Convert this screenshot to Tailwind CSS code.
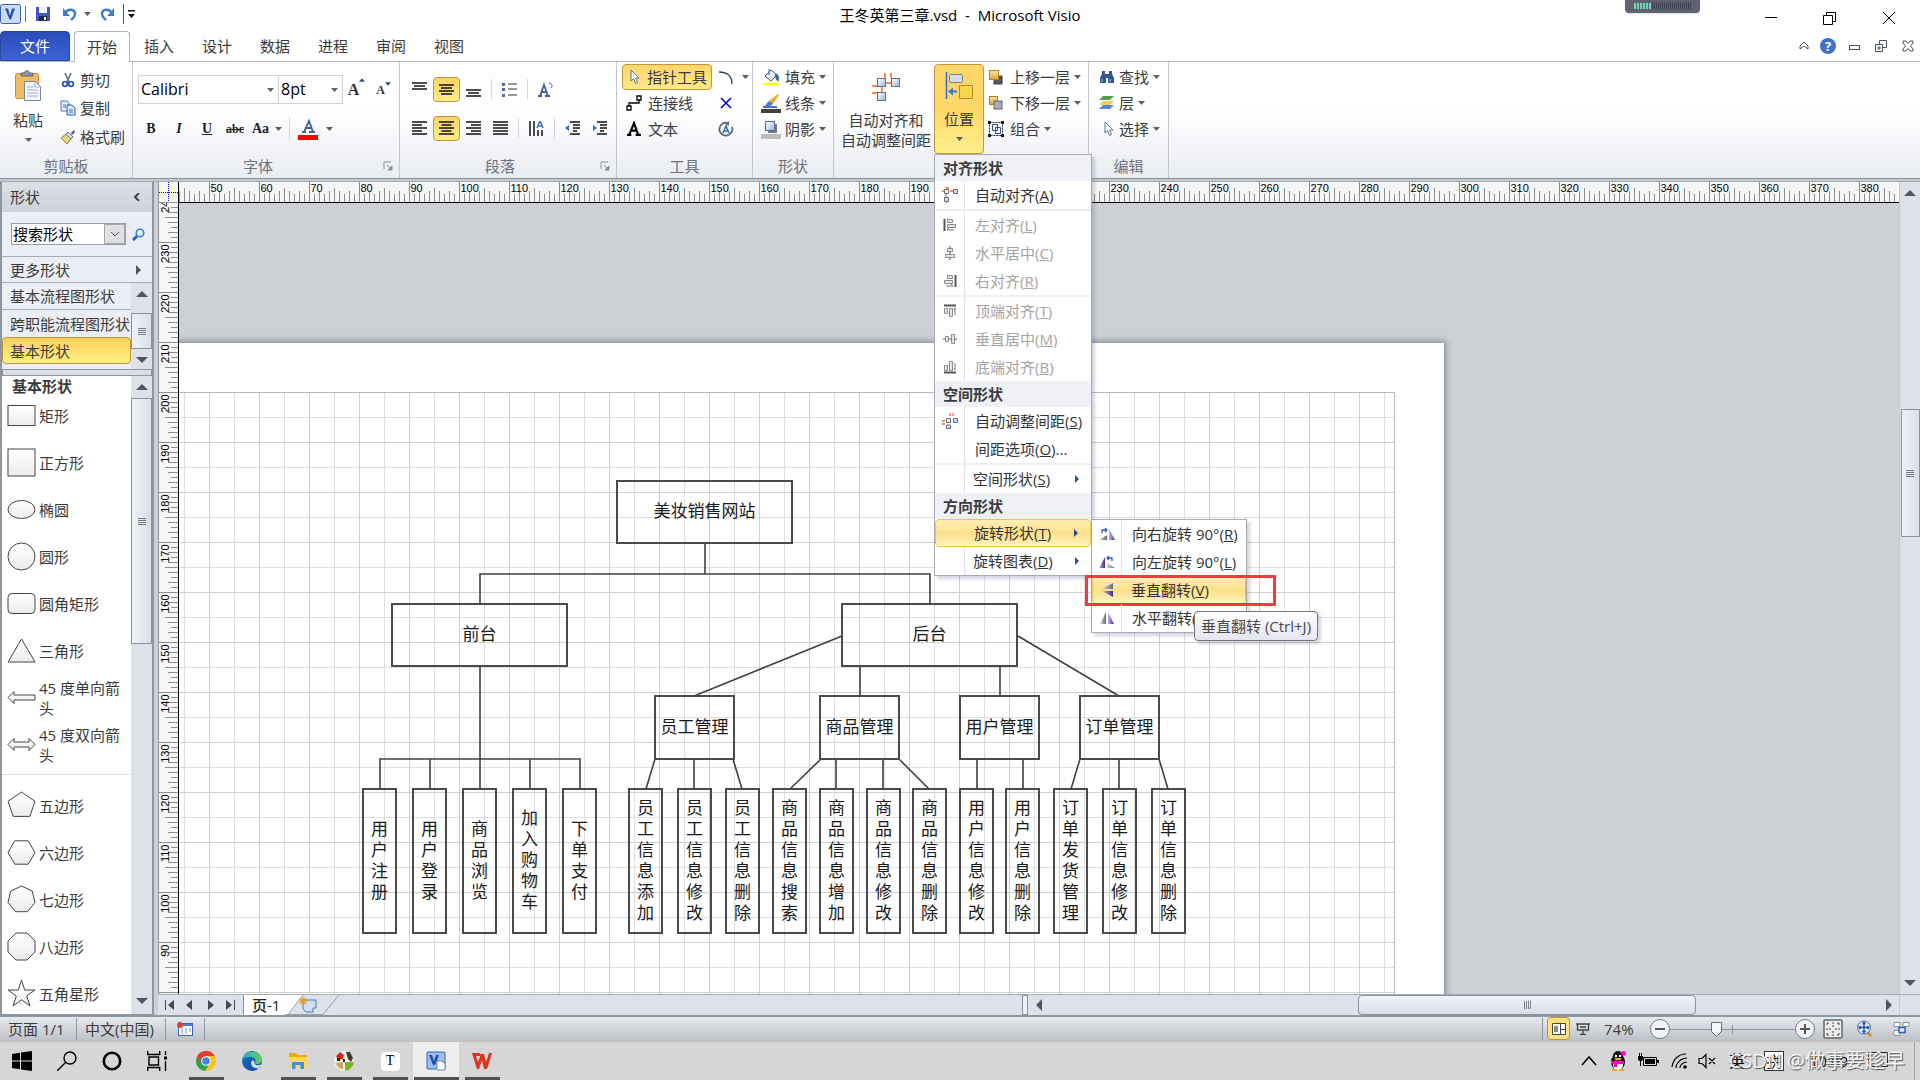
<!DOCTYPE html>
<html lang="zh-CN">
<head>
<meta charset="utf-8">
<title>王冬英第三章.vsd - Microsoft Visio</title>
<script src="https://cdn.jsdelivr.net/npm/@tailwindcss/browser@4"></script>
</head>
<body class="flex h-screen flex-col overflow-hidden bg-white font-['Open_Sans','Noto_Sans_CJK_SC',sans-serif] text-[15px] leading-5 text-[#3b3b3b]">

<svg class="absolute size-0" aria-hidden="true">
  <defs>
    <linearGradient id="gBlue" x1="0" y1="0" x2="1" y2="1"><stop offset="0" stop-color="#fff"/><stop offset="1" stop-color="#9fb6dc"/></linearGradient>
    <linearGradient id="gGold" x1="0" y1="0" x2="0" y2="1"><stop offset="0" stop-color="#fdeaa8"/><stop offset="1" stop-color="#e0a530"/></linearGradient>
    <linearGradient id="gShape" x1="0" y1="0" x2="0" y2="1"><stop offset="0" stop-color="#fff"/><stop offset="1" stop-color="#ececec"/></linearGradient>
    <linearGradient id="gGray" x1="0" y1="0" x2="1" y2="0"><stop offset="0" stop-color="#d5dbe0"/><stop offset="1" stop-color="#5f6d78"/></linearGradient>
    <linearGradient id="gPurple" x1="0" y1="0" x2="1" y2="0"><stop offset="0" stop-color="#c9b8ea"/><stop offset="1" stop-color="#46278c"/></linearGradient>
    <linearGradient id="gEdge" x1="0" y1="0" x2="1" y2="1"><stop offset="0" stop-color="#1b6fc4"/><stop offset="1" stop-color="#0a4a9a"/></linearGradient>
    <linearGradient id="gEdge2" x1="0" y1="0" x2="1" y2="0"><stop offset="0" stop-color="#2aa7e0"/><stop offset="1" stop-color="#5fd45a"/></linearGradient>
    <symbol id="caret" viewBox="0 0 7 4"><path d="M0 0h7L3.500 4z" fill="#5a5f66"/></symbol>
    <symbol id="cursor" viewBox="0 0 12 16"><path d="M2 1v11l2.600-2.400L6.500 14.500l2-1-1.900-4.400H10z" fill="#fff" stroke="#5b7596"/></symbol>
    <symbol id="launcher" viewBox="0 0 10 10"><path d="M1 8V1h7" fill="none" stroke="#8b919b"/><path d="M4 4l3 3M9 5v4H5z" stroke="#8b919b" fill="#8b919b"/></symbol>
    <symbol id="front" viewBox="0 0 16 16"><rect x="6" y="7" width="8" height="8" fill="#555c66" stroke="#3c424a"/><rect x="1.500" y="1.500" width="9" height="9" fill="url(#gGold)" stroke="#b07f2c"/></symbol>
    <symbol id="back" viewBox="0 0 16 16"><rect x="1.500" y="1.500" width="8" height="8" fill="url(#gGold)" stroke="#b07f2c"/><rect x="6" y="6" width="8" height="8" fill="#a8adb3" stroke="#60666e"/></symbol>
    <symbol id="autoalign" viewBox="0 0 30 30"><g stroke="#f26a21" stroke-width="1.500" fill="none"><path d="M14 1v5M20 1v5M14 11h8M11 14v9M1 14h6M1 21h5"/></g><g fill="url(#gBlue)" stroke="#5d6f8e"><rect x="6.500" y="6.500" width="8" height="8"/><rect x="20.500" y="6.500" width="8" height="8"/><rect x="6.500" y="20.500" width="8" height="8"/></g></symbol>
  </defs>
</svg>

<!-- title bar -->
<header class="flex h-8 shrink-0 items-center">
  <div class="flex flex-1 items-center pb-1">
    <svg class="h-7 w-[21px]" viewBox="0 0 21 28"><rect x=".5" y="4.500" width="20" height="19" rx="2" fill="#c9dcf8" stroke="#3763bb"/><path d="M5 8.500l4.500 11h1.500l4-11h-3l-2 7-2-7z" fill="#2b50b0"/></svg>
    <span class="ml-1 h-4 w-px bg-gray-500"></span>
    <button class="ml-[9px]" aria-label="保存"><svg class="size-4" viewBox="0 0 16 16"><path d="M1 1h14v14H1z" fill="#4655c0"/><path d="M4 1h8v6H4z" fill="#eef2fb"/><path d="M4 10h8v5H4z" fill="#20264f"/><path d="M9 11h2v3H9z" fill="#fff"/></svg></button>
    <button class="ml-[11px]" aria-label="撤消"><svg class="size-4" viewBox="0 0 16 16"><path d="M3 7c3-5 10-4 10 1 0 3-2 4-4 6" fill="none" stroke="#3a7cd0" stroke-width="2.400"/><path d="M1 2v8h7z" fill="#3a7cd0"/></svg></button>
    <svg class="ml-1.5 h-1 w-[7px]"><use href="#caret"/></svg>
    <button class="ml-2" aria-label="恢复"><svg class="size-4" viewBox="0 0 16 16"><path d="M13 7C10 2 3 3 3 8c0 3 2 4 4 6" fill="none" stroke="#3a7cd0" stroke-width="2.400"/><path d="M15 2v8H8z" fill="#3a7cd0"/></svg></button>
    <span class="ml-2 h-5 w-px bg-gray-600"></span>
    <svg class="ml-1 h-2 w-[7px]" viewBox="0 0 7 8"><path d="M0 0h7v1.500H0zM0 4h7L3.500 8z" fill="#111"/></svg>
  </div>
  <h1 class="whitespace-pre pb-0.5 text-[15px] text-black">王冬英第三章.vsd  -  Microsoft Visio</h1>
  <div class="flex flex-1 items-start justify-end self-stretch">
    <div class="mr-16 flex h-[13px] w-[75px] justify-center rounded-b bg-[#5f6371] pt-0.5 shadow">
      <svg class="h-2 w-[58px]" viewBox="0 0 58 8"><path d="M0 4h17" stroke="#6fd3b4" stroke-width="6" stroke-dasharray="2 1"/><path d="M18 4h40" stroke="#3d404c" stroke-width="7" stroke-dasharray="1 1"/></svg>
    </div>
    <button class="flex h-9 w-[14px] items-center justify-center" aria-label="最小化"><svg class="h-4 w-3" viewBox="0 0 12 16"><path d="M0 7.500h12" stroke="#000"/></svg></button>
    <button class="ml-11 flex h-9 w-[14px] items-center justify-center" aria-label="还原"><svg class="h-[13px] w-[13px]" viewBox="0 0 13 13"><path d="M.5 3.500h9v9h-9zM3.500 3.500v-3h9v9h-3" fill="none" stroke="#000"/></svg></button>
    <button class="ml-[46px] mr-6 flex h-9 w-[14px] items-center justify-center" aria-label="关闭"><svg class="h-3 w-3" viewBox="0 0 12 12"><path d="M0 0l12 12M12 0L0 12" stroke="#000"/></svg></button>
  </div>
</header>

<!-- tabs -->
<nav class="flex h-[30px] shrink-0 items-end border-b border-[#b3b5b9]">
  <button class="h-[30px] w-[70px] rounded-t border border-[#2a459f] bg-linear-to-b from-[#2c4cba] to-[#3a63d6] text-white">文件</button>
  <button class="-mb-px ml-1 h-[31px] w-[56px] rounded-t border border-b-0 border-[#b3b5b9] bg-white">开始</button>
  <button class="h-[30px] w-[58px]">插入</button>
  <button class="h-[30px] w-[58px]">设计</button>
  <button class="h-[30px] w-[58px]">数据</button>
  <button class="h-[30px] w-[58px]">进程</button>
  <button class="h-[30px] w-[58px]">审阅</button>
  <button class="h-[30px] w-[58px]">视图</button>
  <div class="ml-auto flex h-[30px] items-center gap-[15px] pr-1.5">
    <svg class="h-2.5 w-2.5" viewBox="0 0 10 10"><path d="M1 8V5l4-4 4 4v3L5 5z" fill="none" stroke="#4b525c"/></svg>
    <button class="-mx-1 flex size-4 items-center justify-center rounded-full bg-[#3e73c9] text-[13px] font-bold text-white" aria-label="帮助">?</button>
    <svg class="ml-0.5 h-3 w-[11px]" viewBox="0 0 11 12"><rect x=".5" y="5.500" width="10" height="4" fill="none" stroke="#4b525c"/></svg>
    <svg class="h-3 w-3" viewBox="0 0 12 12"><path d="M.5 4.500h7v7h-7zM4.500 4V.5h7v7H8M3 7h2v2H3z" fill="none" stroke="#4b525c"/></svg>
    <svg class="h-3 w-3" viewBox="0 0 12 12"><path d="M1 1h3l2 2.500L8 1h3v2L8.500 6 11 9v2H8L6 8.500 4 11H1V9l2.500-3L1 3z" fill="none" stroke="#4b525c"/></svg>
  </div>
</nav>

<!-- ribbon -->
<section class="flex h-[116px] shrink-0 bg-linear-to-b from-white from-40% to-[#e9ecf1]" aria-label="功能区">
  <div class="flex w-[133px] flex-col border-r border-[#c3c6ce]">
    <div class="flex flex-1 gap-1">
      <button class="flex w-[56px] flex-col items-center pt-2">
        <svg class="h-8 w-7" viewBox="0 0 28 32"><rect x="1.500" y="3.500" width="23" height="25" rx="2" fill="#f0bc62" stroke="#c98d34"/><path d="M7 6V3h3c1-3 5-3 6 0h3v3z" fill="#8c929c" stroke="#666c76"/><path d="M10.500 11.500h11l5 5v14h-16z" fill="#f3f7fd" stroke="#7488a8"/><path d="M21 12v5h5M13 17h6M13 20h11M13 23h11M13 26h11" stroke="#9fb2cf" fill="none"/></svg>
        <span class="mt-2">粘贴</span>
        <svg class="mt-2 h-1 w-[7px]"><use href="#caret"/></svg>
      </button>
      <div class="flex flex-col pt-1">
        <button class="flex h-7 items-center gap-1"><svg class="size-4" viewBox="0 0 16 16"><path d="M5 1l4 9M11 1L7 10" stroke="#5a6880" stroke-width="1.500"/><circle cx="5" cy="12" r="2.300" fill="none" stroke="#2f59b8" stroke-width="1.800"/><circle cx="11" cy="12" r="2.300" fill="none" stroke="#2f59b8" stroke-width="1.800"/></svg>剪切</button>
        <button class="flex h-7 items-center gap-1"><svg class="size-4" viewBox="0 0 16 16"><path d="M1 1h6l2 2v8H1z" fill="#e6effb" stroke="#4772b8"/><path d="M7 5h5l3 3v7H7z" fill="#dbe7f8" stroke="#2f59a8"/><path d="M3 5h3M3 7h3M9 10h4M9 12h4" stroke="#4772b8"/></svg>复制</button>
        <button class="flex h-[30px] items-center gap-1 whitespace-nowrap"><svg class="size-4" viewBox="0 0 16 16"><path d="M1 9l5-4 5 5-4 5z" fill="#e8d27a" stroke="#9c8433"/><path d="M6 5l2-2 5 5-2 2z" fill="#dcdfe6" stroke="#6d7480"/><path d="M11 4l3-3 1 2-3 3z" fill="#4a4f9c"/></svg>格式刷</button>
      </div>
    </div>
    <div class="flex h-6 items-center justify-center text-[#6b7280]">剪贴板</div>
  </div>

  <div class="flex w-[267px] flex-col border-r border-[#c3c6ce]">
    <div class="flex flex-1 flex-col pt-[13px]">
      <div class="flex h-[29px] items-center pl-[5px] text-black">
        <label class="relative flex h-[29px] w-[141px] items-center border border-[#cfd2d6] bg-white"><select class="w-full appearance-none bg-transparent px-0.5 pb-0.5 text-base" aria-label="字体"><option>Calibri</option></select><svg class="pointer-events-none absolute right-1 h-1 w-[7px]"><use href="#caret"/></svg></label>
        <label class="relative -ml-px flex h-[29px] w-[65px] items-center border border-[#cfd2d6] bg-white"><select class="w-full appearance-none bg-transparent px-0.5 pb-0.5 text-base" aria-label="字号"><option>8pt</option></select><svg class="pointer-events-none absolute right-1 h-1 w-[7px]"><use href="#caret"/></svg></label>
        <button class="flex w-[27px] items-start justify-center font-['Liberation_Serif',serif] text-base font-bold text-[#333]" aria-label="增大字号">A<svg class="h-1 w-1.5" viewBox="0 0 7 4"><path d="M0 4h7L3.500 0z" fill="#2b4a8c"/></svg></button>
        <button class="flex w-[27px] items-start justify-center font-['Liberation_Serif',serif] text-xs font-bold text-[#333]" aria-label="减小字号">A<svg class="h-1 w-1.5" viewBox="0 0 7 4"><path d="M0 0h7L3.500 4z" fill="#2b4a8c"/></svg></button>
      </div>
      <div class="mt-[11px] flex h-7 items-center pl-1 font-['Liberation_Serif',serif] text-sm font-bold text-[#222]">
        <button class="w-7">B</button><button class="w-7 italic">I</button><button class="w-7 underline">U</button><button class="w-7 text-xs line-through">abc</button>
        <button class="flex w-9 items-center justify-center gap-1.5">Aa<svg class="h-1 w-[7px]"><use href="#caret"/></svg></button>
        <span class="ml-1 h-6 w-px bg-[#d3d6dc]"></span>
        <button class="ml-2 flex items-center gap-2" aria-label="字体颜色"><svg class="h-[22px] w-5" viewBox="0 0 20 22"><path d="M0 17h20v5H0z" fill="#f00"/><path d="M4 14h4M11 14h6M6 14l5-11 4 11M7.500 10h6" stroke="#3f5f9f" stroke-width="1.800" fill="none"/></svg><svg class="h-1 w-[7px]"><use href="#caret"/></svg></button>
      </div>
    </div>
    <div class="flex h-6 items-center pr-1.5 text-[#6b7280]"><span class="flex-1 text-center">字体</span><svg class="size-2.5"><use href="#launcher"/></svg></div>
  </div>

  <div class="flex w-[217px] flex-col border-r border-[#c3c6ce]">
    <div class="flex flex-1 flex-col gap-[13px] pl-1.5 pt-[14px]" id="para"></div>
    <div class="flex h-6 items-center pr-1.5 text-[#6b7280]"><span class="flex-1 text-center">段落</span><svg class="size-2.5"><use href="#launcher"/></svg></div>
  </div>

  <div class="flex w-[136px] flex-col border-r border-[#c3c6ce]">
    <div class="flex flex-1 gap-1.5 pl-[5px] pt-0.5">
      <div class="flex w-[90px] flex-col">
        <button class="flex h-[26px] items-center gap-1.5 whitespace-nowrap rounded-sm border border-[#c29539] bg-linear-to-b from-[#ffd56a] to-[#ffe98a] pl-1.5"><svg class="h-4 w-3"><use href="#cursor"/></svg>指针工具</button>
        <button class="flex h-[26px] items-center gap-1.5 pl-1"><svg class="size-4" viewBox="0 0 16 16"><path d="M1 11h4v4H1zM11 1h4v4h-4zM3 11V8h10V5" fill="none" stroke="#000" stroke-width="1.300"/></svg>连接线</button>
        <button class="flex h-[26px] items-center gap-1.5 pl-1"><svg class="size-4" viewBox="0 0 15 15"><path d="M1 13h4M9 13h5M3 13l4.500-11 4 11M5 9h5" stroke="#000" stroke-width="2" fill="none"/></svg>文本</button>
      </div>
      <div class="flex flex-col">
        <button class="flex h-[26px] items-center gap-2" aria-label="线条工具"><svg class="size-4" viewBox="0 0 16 16"><path d="M1 3c8 0 13 4 13 12" fill="none" stroke="#2b4468" stroke-width="1.300"/></svg><svg class="h-1 w-[7px]"><use href="#caret"/></svg></button>
        <button class="flex h-[26px] items-center pl-0.5" aria-label="连接点"><svg class="size-3" viewBox="0 0 12 12"><path d="M1 1l10 10M11 1L1 11" stroke="#00c" stroke-width="1.600"/></svg></button>
        <button class="flex h-[26px] items-center" aria-label="文本块"><svg class="size-4" viewBox="0 0 16 16"><path d="M10 2a6.500 6.500 0 1 0 4 4" fill="none" stroke="#5d6878" stroke-width="1.800"/><path d="M11 0v5l-4-2z" fill="#5d6878"/><path d="M5 12l3-7 3 7M6 10h4" fill="none" stroke="#3565c0" stroke-width="1.500"/></svg></button>
      </div>
    </div>
    <div class="flex h-6 items-center justify-center text-[#6b7280]">工具</div>
  </div>

  <div class="flex w-[81px] flex-col border-r border-[#c3c6ce]">
    <div class="flex flex-1 flex-col pl-2 pt-0.5">
      <button class="flex h-[26px] items-center whitespace-nowrap"><svg class="h-5 w-5" viewBox="0 0 20 20"><path d="M3 17h15" stroke="#ff0" stroke-width="2.500"/><path d="M4 9l6-6 6 5-6 6z" fill="#e8edf5" stroke="#47597c"/><path d="M8 2v6M15 7c3 1 3 4 2 7-2-1-2-4-3-6z" fill="#3565b0" stroke="#3565b0"/></svg><span class="mx-1">填充</span><svg class="h-1 w-[7px]"><use href="#caret"/></svg></button>
      <button class="flex h-[26px] items-center whitespace-nowrap"><svg class="h-5 w-5" viewBox="0 0 20 20"><path d="M0 16h20v4H0z" fill="#3f3f46"/><path d="M2 14h14" stroke="#1b33d6" stroke-width="1.500"/><path d="M7 9l3 3-6 1z" fill="#2f6fc8"/><path d="M8 8l9-7 1 1-6 9-3 1z" fill="#f0a730"/><path d="M8 8l4 3-3 2-4 0z" fill="#3f7fd8"/></svg><span class="mx-1">线条</span><svg class="h-1 w-[7px]"><use href="#caret"/></svg></button>
      <button class="flex h-[26px] items-center whitespace-nowrap"><svg class="h-5 w-5" viewBox="0 0 20 20"><path d="M0 15h20v5H0z" fill="#bdbdbd"/><rect x="7" y="5" width="9" height="9" fill="#777"/><rect x="4.500" y="2.500" width="9" height="9" fill="url(#gBlue)" stroke="#536f9f"/></svg><span class="mx-1">阴影</span><svg class="h-1 w-[7px]"><use href="#caret"/></svg></button>
    </div>
    <div class="flex h-6 items-center justify-center text-[#6b7280]">形状</div>
  </div>

  <div class="flex w-[255px] flex-col border-r border-[#c3c6ce]">
    <div class="flex flex-1 pt-0.5">
      <button class="flex w-[100px] flex-col items-center whitespace-nowrap pl-1 pt-2">
        <svg class="h-[30px] w-[30px]"><use href="#autoalign"/></svg>
        <span class="mt-2">自动对齐和</span><span>自动调整间距</span>
      </button>
      <div class="relative h-[90px] w-[50px]">
        <button class="flex h-[90px] w-[50px] flex-col items-center rounded-sm border border-[#c29539] bg-linear-to-b from-[#ffd56a] via-[#ffd768] to-[#fff08c] pt-1.5" aria-haspopup="true">
          <svg class="h-[30px] w-7" viewBox="0 0 28 30"><path d="M1.500 1v27" stroke="#2f6fd0" stroke-width="1.500"/><rect x="4.500" y="3.500" width="13" height="8" rx="1" fill="#d8dce2" stroke="#777f8a"/><rect x="14.500" y="14.500" width="13" height="13" fill="#f6d84f" stroke="#b08d2c"/><path d="M3 20.500l5-4v3h4v2H8v3z" fill="#4377c8"/></svg>
          <span class="mt-2">位置</span>
          <svg class="mt-2 h-1 w-[7px]"><use href="#caret"/></svg>
        </button>
        <!-- position menu -->
        <div class="absolute left-0 top-full z-40 w-[158px] border border-[#a7abb4] bg-white shadow-[3px_3px_3px_rgba(90,90,140,0.25)]" id="menu" role="menu"></div>
      </div>
      <div class="flex flex-col whitespace-nowrap pl-1">
        <button class="flex h-[26px] items-center"><svg class="size-4"><use href="#front"/></svg><span class="ml-1.5 mr-1">上移一层</span><svg class="h-1 w-[7px]"><use href="#caret"/></svg></button>
        <button class="flex h-[26px] items-center"><svg class="size-4"><use href="#back"/></svg><span class="ml-1.5 mr-1">下移一层</span><svg class="h-1 w-[7px]"><use href="#caret"/></svg></button>
        <button class="flex h-[26px] items-center"><svg class="size-4" viewBox="0 0 16 16"><path d="M1.500 1.500h13v13h-13z" fill="none" stroke="#222" stroke-dasharray="2 1"/><path d="M0 0h3v3H0zM13 0h3v3h-3zM0 13h3v3H0zM13 13h3v3h-3z" fill="#111"/><path d="M4.500 3.500h5v6h-5zM7.500 6.500h5v6h-5z" fill="none" stroke="#2f4f8f"/></svg><span class="ml-1.5 mr-1">组合</span><svg class="h-1 w-[7px]"><use href="#caret"/></svg></button>
      </div>
    </div>
    <div class="flex h-6 items-center justify-center text-[#6b7280]">排列</div>
  </div>

  <div class="flex w-[80px] flex-col border-r border-[#c3c6ce]">
    <div class="flex flex-1 flex-col whitespace-nowrap pl-2.5 pt-0.5">
      <button class="flex h-[26px] items-center"><svg class="h-4 w-4" viewBox="0 0 16 16"><path d="M3 2h3v3h4V2h3v3l2 4v5H9V9H7v5H1V9l2-4z" fill="#34558f"/><path d="M3 10v3M11 10v3" stroke="#a9c4ee"/></svg><span class="mx-1">查找</span><svg class="h-1 w-[7px]"><use href="#caret"/></svg></button>
      <button class="flex h-[26px] items-center"><svg class="h-4 w-4" viewBox="0 0 16 16"><path d="M4 10h11l-4 4H0z" fill="#4f8ae0"/><path d="M4 6h11l-4 4H0z" fill="#f0cf4e"/><path d="M4 1h11l-4 4H0z" fill="#4ea04e"/></svg><span class="mx-1">层</span><svg class="h-1 w-[7px]"><use href="#caret"/></svg></button>
      <button class="flex h-[26px] items-center"><svg class="ml-1 h-4 w-3"><use href="#cursor"/></svg><span class="mx-1">选择</span><svg class="h-1 w-[7px]"><use href="#caret"/></svg></button>
    </div>
    <div class="flex h-6 items-center justify-center text-[#6b7280]">编辑</div>
  </div>
</section>
<div class="h-1 shrink-0 border-y border-[#8d939b] border-b-[#a9adb3] bg-[#c3c7cd]"></div>

<!-- work area -->
<main class="flex min-h-0 flex-1 bg-[#cdd0d5]">
  <aside class="mr-1 flex w-[154px] shrink-0 flex-col border-x-2 border-[#9096a0] bg-[#ebeff5]">
    <div class="flex h-[30px] items-center justify-between bg-linear-to-b from-[#dce0e6] to-[#cdd3da] pl-2 pr-3"><span>形状</span><svg class="h-2 w-1.5" viewBox="0 0 6 8"><path d="M5 0L1 4l4 4" fill="none" stroke="#3d4450" stroke-width="2"/></svg></div>
    <div class="flex h-11 items-center pl-[9px]">
      <div class="flex h-[22px] w-[115px] border border-[#9a9da3] bg-white">
        <input class="w-[92px] px-px text-[15px] text-black" value="搜索形状" aria-label="搜索形状">
        <button class="flex w-[21px] items-center justify-center border border-[#a3a6ab] bg-[#e0e0e2]" aria-label="展开"><svg class="h-1.5 w-2.5" viewBox="0 0 10 6"><path d="M1 1l4 4 4-4" fill="none" stroke="#555"/></svg></button>
      </div>
      <button class="ml-1.5" aria-label="搜索"><svg class="size-[13px]" viewBox="0 0 13 13"><path d="M1 12l4-4" stroke="#2b5fc0" stroke-width="3"/><circle cx="8" cy="5" r="3.800" fill="#e4f0fb" stroke="#2f86d0" stroke-width="1.600"/></svg></button>
    </div>
    <button class="flex h-[27px] shrink-0 items-center justify-between border-y border-[#a6acb5] pl-2 pr-[11px]">更多形状<svg class="h-2.5 w-[5px]" viewBox="0 0 5 10"><path d="M0 0l5 5-5 5z" fill="#50565f"/></svg></button>
    <div class="flex h-[86px] shrink-0">
      <div class="flex w-[129px] flex-col overflow-hidden whitespace-nowrap">
        <button class="h-[27px] border-b border-[#a6acb5] pl-2 text-left">基本流程图形状</button>
        <button class="h-[27px] pl-2 text-left">跨职能流程图形状</button>
        <button class="h-[27px] rounded-sm border border-[#c29539] bg-linear-to-b from-[#ffcf5e] to-[#fff082] pl-[7px] text-left">基本形状</button>
      </div>
      <div class="flex flex-1 flex-col items-center bg-[#dde1e8]">
        <svg class="mt-2 h-1.5 w-3" viewBox="0 0 12 6"><path d="M0 6h12L6 0z" fill="#50565f"/></svg>
        <div class="mt-4 flex h-9 w-full items-center justify-center border border-[#8b929d] bg-linear-to-r from-[#f0f3f8] to-[#d9dee6]"><svg class="h-[7px] w-2" viewBox="0 0 8 7"><path d="M0 .5h8M0 2.500h8M0 4.500h8M0 6.500h8" stroke="#7a808a"/></svg></div>
        <svg class="mt-2 h-1.5 w-3" viewBox="0 0 12 6"><path d="M0 0h12L6 6z" fill="#50565f"/></svg>
      </div>
    </div>
    <div class="h-[7px] shrink-0 border border-[#9096a0] bg-[#d9dee6]"></div>
    <div class="flex min-h-0 flex-1">
      <div class="flex w-[129px] flex-col overflow-hidden bg-white">
        <h2 class="h-4 shrink-0 pl-2.5 font-bold">基本形状</h2>
        <ul id="shapes"></ul>
      </div>
      <div class="flex flex-1 flex-col items-center bg-[#dde1e8]">
        <svg class="mt-2 h-1.5 w-3 shrink-0" viewBox="0 0 12 6"><path d="M0 6h12L6 0z" fill="#50565f"/></svg>
        <div class="mt-2 flex h-[246px] w-full shrink-0 items-center justify-center border border-[#8b929d] bg-linear-to-r from-[#f0f3f8] to-[#d9dee6]"><svg class="h-[7px] w-2" viewBox="0 0 8 7"><path d="M0 .5h8M0 2.500h8M0 4.500h8M0 6.500h8" stroke="#7a808a"/></svg></div>
        <svg class="mb-2.5 mt-auto h-1.5 w-3 shrink-0" viewBox="0 0 12 6"><path d="M0 0h12L6 6z" fill="#50565f"/></svg>
      </div>
    </div>
    <div class="h-px bg-[#9096a0]"></div>
  </aside>

  <div class="flex min-w-0 flex-1 flex-col">
    <div class="flex min-h-0 flex-1">
      <div class="grid min-w-0 flex-1 grid-cols-[21px_1fr] grid-rows-[21px_1fr]">
        <svg class="h-[21px] w-[21px] bg-[#f6f6f6]" viewBox="0 0 21 21"><path d="M.5 0v21M0 20.500h21" stroke="#8d939b"/><path d="M1 10.500h20M10.500 0v20" stroke="#00f" stroke-dasharray="1 1"/><path d="M20.500 0v21" stroke="#000"/></svg>
        <div class="overflow-hidden border-b border-black bg-[#f6f6f6]"><svg class="h-5 w-[1720px]" id="hruler"></svg></div>
        <div class="overflow-hidden border-l border-r border-[#8d939b] border-r-black bg-[#f6f6f6]"><svg class="h-[800px] w-[19px]" id="vruler"></svg></div>
        <div class="relative overflow-hidden" id="canvas">
          <div class="absolute -left-10 top-[140px] h-[1200px] w-[1305px] bg-white shadow-[0_0_6px_2px_rgba(90,96,108,0.6)]"></div>
          <svg class="absolute left-0 top-0 h-[800px] w-[1720px]" id="lines" viewBox="179 203 1720 800"></svg>
        </div>
      </div>
      <!-- vertical scroll bar -->
      <div class="flex w-[21px] shrink-0 flex-col items-center border-l border-[#c5cad2] bg-[#dde1e8]">
        <svg class="mt-2 h-1.5 w-3" viewBox="0 0 12 6"><path d="M0 6h12L6 0z" fill="#50565f"/></svg>
        <div class="mt-[213px] flex h-[128px] w-[19px] items-center justify-center border border-[#8b929d] bg-linear-to-r from-[#f0f3f8] to-[#d9dee6]"><svg class="h-[7px] w-2" viewBox="0 0 8 7"><path d="M0 .5h8M0 2.500h8M0 4.500h8M0 6.500h8" stroke="#7a808a"/></svg></div>
        <svg class="mb-2 mt-auto h-1.5 w-3" viewBox="0 0 12 6"><path d="M0 0h12L6 6z" fill="#50565f"/></svg>
      </div>
    </div>
    <!-- page tabs and horizontal scroll bar -->
    <div class="flex h-[21px] shrink-0 border-t border-[#a6acb5] bg-[#dde1e9]">
      <div class="flex w-[85px] items-center gap-3 pl-[7px]">
        <svg class="h-2.5 w-[9px]" viewBox="0 0 9 10"><path d="M.5 0v10" stroke="#3f4650"/><path d="M9 0L3 5l6 5z" fill="#3f4650"/></svg>
        <svg class="h-2.5 w-[7px]" viewBox="0 0 7 10"><path d="M6 0L0 5l6 5z" fill="#3f4650"/></svg>
        <svg class="ml-0.5 h-2.5 w-[7px]" viewBox="0 0 7 10"><path d="M1 0l6 5-6 5z" fill="#3f4650"/></svg>
        <svg class="h-2.5 w-[9px]" viewBox="0 0 9 10"><path d="M8.500 0v10" stroke="#3f4650"/><path d="M0 0l6 5-6 5z" fill="#3f4650"/></svg>
      </div>
      <button class="w-[42px] border-l border-[#8b929d] bg-white pl-2 text-left text-[15px] font-medium text-[#222]">页-1</button>
      <svg class="h-5 w-14" viewBox="0 0 56 20"><path d="M0 0h18L3 19H0z" fill="#fff"/><path d="M0 19.500h3L18 0M3 19.500h35L54 0" fill="none" stroke="#9aa1ac"/><path d="M18 5h13v8h-3v4h-7l-3-3z" fill="#cfe0f6" stroke="#5474a8"/><path d="M18 2v8M14 6h8M15 3l6 6M21 3l-6 6" stroke="#e89a1c" stroke-width="1.200"/></svg>
      <div class="ml-auto h-5 w-1.5 border border-[#8b929d] bg-[#eef1f5]"></div>
      <div class="flex w-[871px] items-center">
        <svg class="ml-2 h-3 w-1.5" viewBox="0 0 6 12"><path d="M6 0L0 6l6 6z" fill="#50565f"/></svg>
        <div class="ml-[316px] flex h-5 w-[338px] items-center justify-center rounded-sm border border-[#8b929d] bg-linear-to-b from-[#f0f3f8] to-[#d9dee6]"><svg class="h-2 w-[7px]" viewBox="0 0 7 8"><path d="M.5 0v8M2.500 0v8M4.500 0v8M6.500 0v8" stroke="#7a808a"/></svg></div>
        <svg class="ml-auto mr-[7px] h-3 w-1.5" viewBox="0 0 6 12"><path d="M0 0l6 6-6 6z" fill="#50565f"/></svg>
      </div>
      <div class="w-[21px] border-l border-[#c5cad2]"></div>
    </div>
  </div>
</main>

<!-- status bar -->
<footer class="flex h-[27px] shrink-0 items-center border-t-2 border-[#8d96a3] bg-linear-to-b from-[#e6e9ed] to-[#bcc0c6] pb-0.5">
  <span class="w-[76px] pl-2">页面 1/1</span>
  <span class="h-[22px] w-px bg-[#8d96a3]"></span>
  <span class="w-[88px] whitespace-nowrap pl-2">中文(中国)</span>
  <span class="h-[22px] w-px bg-[#8d96a3]"></span>
  <button class="flex w-[38px] justify-center" aria-label="宏录制"><svg class="h-[14px] w-4" viewBox="0 0 16 14"><rect x="1.500" y="1.500" width="14" height="12" fill="#fff" stroke="#3a62b8"/><path d="M2 2h13v2H2z" fill="#4d7fd8"/><path d="M4 7h2M8 7h2M12 7h2M4 9h2M8 9h2M12 9h2M4 11h2M8 11h2" stroke="#6a8fd0"/><circle cx="3" cy="3" r="3" fill="#d8422c"/></svg></button>
  <span class="h-[22px] w-px bg-[#8d96a3]"></span>
  <div class="ml-auto flex items-center">
    <span class="mr-1 h-[22px] w-px bg-[#8d96a3]"></span>
    <button class="flex h-[23px] w-[23px] items-center justify-center rounded-sm border border-[#c29539] bg-[#ffe07c]" aria-label="普通视图"><svg class="h-3 w-[14px]" viewBox="0 0 14 12"><path d="M.5.5h13v11H.5zM8.500 0v12M8 6.500h6" fill="#fff" stroke="#444"/><path d="M2 3h4v6H2z" fill="#888"/></svg></button>
    <svg class="ml-1.5 h-3 w-[14px]" viewBox="0 0 14 12"><path d="M0 1h14M1.500 1v6h11V1M4 4h6M7 7v4M4 11.500h6" fill="none" stroke="#444" stroke-width="1.300"/></svg>
    <span class="ml-3.5 w-[38px] text-[15px]">74%</span>
    <button class="ml-2 flex size-5 items-center justify-center rounded-full border border-[#777d86] bg-[#f3f4f6]" aria-label="缩小"><svg class="h-3 w-3" viewBox="0 0 12 12"><path d="M1 6h10" stroke="#555" stroke-width="2"/></svg></button>
    <div class="relative flex h-5 w-[125px] items-center">
      <svg class="h-5 w-[125px]" viewBox="0 0 125 20"><path d="M0 10.500h125M62.500 6v9" stroke="#8a93a5"/><path d="M41.500 3.500h10v9l-5 5-5-5z" fill="#f6f7f9" stroke="#666d78"/></svg>
      <input type="range" min="10" max="400" value="74" aria-label="缩放" class="absolute inset-0 w-full cursor-pointer opacity-0">
    </div>
    <button class="flex size-5 items-center justify-center rounded-full border border-[#777d86] bg-[#f3f4f6]" aria-label="放大"><svg class="h-3 w-3" viewBox="0 0 12 12"><path d="M1 6h10M6 1v10" stroke="#555" stroke-width="2"/></svg></button>
    <button class="ml-2" aria-label="适应窗口"><svg class="size-5" viewBox="0 0 20 20"><rect x="1" y="1" width="18" height="18" rx="1" fill="#eee" stroke="#666" stroke-width="1.500"/><path d="M8 10H3M12 10h5M10 8V3M10 12v5" stroke="#444" stroke-dasharray="2 1"/><path d="M4 6V4h2M14 4h2v2M4 14v2h2M16 14v2h-2" fill="none" stroke="#444"/></svg></button>
    <button class="ml-[13px]" aria-label="平移和缩放"><svg class="size-[17px]" viewBox="0 0 17 17"><path d="M11 12l4 4" stroke="#d88f28" stroke-width="3"/><circle cx="8" cy="7.500" r="6.500" fill="#dbe9fb" stroke="#4a6fae"/><path d="M8 2.500v10M3 7.500h10M6.500 4L8 2.500 9.500 4M6.500 11L8 12.500 9.500 11M4.500 6L3 7.500 4.500 9M11.500 6L13 7.500 11.500 9" fill="none" stroke="#1f4fa8" stroke-width="1.300"/></svg></button>
    <button class="ml-5 mr-2.5" aria-label="切换窗口"><svg class="h-4 w-[17px]" viewBox="0 0 17 16"><path d="M1 1.500h6v4H1zM10 1.500h6v4h-6zM1 9.500h6v5H1z" fill="#fff" stroke="#8a919c"/><path d="M6 6.500h6v5H6z" fill="#e9f1fc" stroke="#2f5fb8" stroke-width="1.500"/></svg></button>
  </div>
</footer>

<!-- taskbar -->
<nav class="flex h-[38px] shrink-0 items-stretch bg-[#d6d6d6] text-black" aria-label="任务栏">
  <button class="flex w-11 items-center justify-center" aria-label="开始"><svg class="size-5" viewBox="0 0 20 20"><path d="M0 3l8-1.200V9.500H0zM9 1.600L20 0v9.500H9zM0 10.500h8v7.700L0 17zM9 10.500h11V20L9 18.400z"/></svg></button>
  <button class="flex w-[45px] items-center justify-center" aria-label="搜索"><svg class="size-5" viewBox="0 0 20 20"><circle cx="13" cy="7" r="6" fill="none" stroke="#000" stroke-width="1.400"/><path d="M8.500 11.500L0 20" stroke="#000" stroke-width="1.400"/></svg></button>
  <button class="flex w-[45px] items-center justify-center" aria-label="Cortana"><svg class="size-5" viewBox="0 0 20 20"><circle cx="10" cy="10" r="8.200" fill="none" stroke="#000" stroke-width="2.600"/></svg></button>
  <button class="mr-1 flex w-[45px] items-center justify-center" aria-label="任务视图"><svg class="size-5" viewBox="0 0 20 20"><path d="M.7 0v3.500h12V0M.7 20v-3.500h12V20M2 6h9.500v8H2zM18.500 0v4M18.500 10v10" fill="none" stroke="#000" stroke-width="1.400"/><path d="M17 5.500h3v3h-3z"/></svg></button>
  <button class="relative flex w-[46px] items-center justify-center after:absolute after:bottom-0 after:h-[3px] after:w-[35px] after:bg-[#505050]" aria-label="Chrome"><svg class="size-5" viewBox="0 0 20 20"><circle cx="10" cy="10" r="10" fill="#fbc116"/><path d="M1.300 5A10 10 0 0 0 9 20l5-8-4-2z" fill="#2da44e"/><path d="M10 5h8.700A10 10 0 0 0 1.300 5l4.400 7.500z" fill="#e33b2e"/><circle cx="10" cy="10" r="4.800" fill="#fff"/><circle cx="10" cy="10" r="3.800" fill="#4285f4"/></svg></button>
  <button class="flex w-[46px] items-center justify-center" aria-label="Edge"><svg class="size-5" viewBox="0 0 20 20"><circle cx="10" cy="10" r="10" fill="url(#gEdge)"/><path d="M0 9C1-1 19-3 20 9c0 4-6 5-7 3 2-3-1-6-5-6C4 6 1 7 0 9z" fill="url(#gEdge2)"/><path d="M12.500 12c1 3 5 2.500 7 1-1 2-2 3.500-3.500 4.500-4 0-7-2-7-5.500 0-1 .5-2 1.500-2.500 1-.5 2 .5 2 2.500z" fill="#d6d6d6"/></svg></button>
  <button class="relative flex w-[46px] items-center justify-center after:absolute after:bottom-0 after:h-[3px] after:w-[35px] after:bg-[#505050]" aria-label="文件资源管理器"><svg class="size-5" viewBox="0 0 20 20"><path d="M1 2h7l2 2h9v13H1z" fill="#e8a820"/><path d="M1 6h18v11H1z" fill="#fdd663"/><path d="M4 18v-7h12v7h-3.500v-4h-5v4z" fill="#3a96e0"/></svg></button>
  <button class="relative flex w-[46px] items-center justify-center after:absolute after:bottom-0 after:h-[3px] after:w-[35px] after:bg-[#505050]" aria-label="应用"><svg class="size-5" viewBox="0 0 20 20"><circle cx="10" cy="10" r="10" fill="#f4f0ea"/><path d="M2 5l4-4 4 3-1 4-5 1z" fill="#d4271e"/><path d="M12 1h4l3 6-2 4-3-3z" fill="#4a3630"/><path d="M11 11h9a10 10 0 0 1-9 9z" fill="#77b52a"/><path d="M1 12l8-1v7l-4-1z" fill="#c9a45e"/><path d="M3 7h3v3H3zM9 8h2v3H9z" fill="#222"/></svg></button>
  <button class="relative flex w-[46px] items-center justify-center after:absolute after:bottom-0 after:h-[3px] after:w-[35px] after:bg-[#505050]" aria-label="Typora"><span class="flex h-[19px] w-[19px] items-center justify-center rounded-sm bg-white font-['Liberation_Serif',serif] text-sm">T</span></button>
  <button class="relative flex w-[46px] items-center justify-center bg-[#eeeeee] after:absolute after:bottom-0 after:h-[3px] after:w-[45px] after:bg-[#505050]" aria-label="Visio"><svg class="size-5" viewBox="0 0 20 20"><rect x="1" y="1" width="18" height="17" rx="1" fill="#9dbcf0" stroke="#3763bb"/><path d="M3 4l4 10h2l4-10h-3l-2 6-2-6z" fill="#2348a8"/><path d="M11 10h5l3 3v6h-8z" fill="#fff" stroke="#6685c4"/></svg></button>
  <button class="relative flex w-[46px] items-center justify-center after:absolute after:bottom-0 after:h-[3px] after:w-[35px] after:bg-[#505050]" aria-label="WPS"><svg class="size-5" viewBox="0 0 20 20"><path d="M0 2h8l1 3H4l2 6 3-8h3l2 8 3-9h3l-5 16h-3L10 9l-3 9H5z" fill="#e0301e"/></svg></button>

  <div class="relative ml-auto flex items-center">
    <svg class="h-3 w-4" viewBox="0 0 16 12"><path d="M1 10l7-8 7 8" fill="none" stroke="#000" stroke-width="1.500"/></svg>
    <svg class="ml-3 h-5 w-[18px]" viewBox="0 0 18 20"><ellipse cx="9" cy="11" rx="7" ry="8" fill="#111"/><ellipse cx="9" cy="14" rx="5" ry="5" fill="#fff"/><circle cx="9" cy="5" r="5" fill="#111"/><path d="M6 4h2v2H6zM10 4h2v2h-2z" fill="#fff"/><path d="M5 7h8l-2 2H7zM3 18h5v2H3zM10 18h5v2h-5z" fill="#f5a61c"/><path d="M2 10h13v3H8v3H5v-3H2zM11 1l5-1 1 4-4 1z" fill="#f0c"/></svg>
    <svg class="ml-[11px] h-4 w-[21px]" viewBox="0 0 21 16"><path d="M5.500 4.500h13v8h-13z" fill="none" stroke="#000"/><path d="M7 6h10v5H7zM19 7h2v3h-2zM0 3h5v3l-1 2H1L0 6zM1 0h1v3H1zM3 0h1v3H3zM2 8h1v5H2z"/></svg>
    <svg class="ml-3 h-4 w-[17px]" viewBox="0 0 17 16"><path d="M1 14C2 6 8 1 15 1M5 15c0-5 5-10 11-10M9 15c0-3 3-6 7-6" fill="none" stroke="#000" stroke-width="1.200"/><circle cx="14" cy="14" r="1.800"/></svg>
    <svg class="ml-2.5 h-4 w-[19px]" viewBox="0 0 19 16"><path d="M1 5.500h3l4-4v13l-4-4H1zM11 5l6 6M17 5l-6 6" fill="none" stroke="#000" stroke-width="1.200"/></svg>
    <span class="ml-3 text-base leading-6">英</span>
    <span class="ml-[19px] flex size-5 items-center justify-center border border-[#333] bg-white text-[15px]">拼</span>
    <time class="ml-6 w-[42px] text-center text-[15px]">10:09</time>
    <svg class="ml-[18px] h-[18px] w-5" viewBox="0 0 20 18"><path d="M.5.500h19v14h-6l-3 3v-3H.5z" fill="none" stroke="#222"/></svg>
    <span class="ml-[26px] mr-[5px] h-[38px] w-px bg-[#a4a4a4]"></span>
    <span class="pointer-events-none absolute right-[15px] top-[5px] whitespace-nowrap text-xl leading-7 text-white/90 [text-shadow:1px_1px_1px_#555]">CSDN @做事要趁早</span>
  </div>
</nav>

<script>
const $ = id => document.getElementById(id);

// ---- paragraph group icons ----
const bars = (ws, align, top) => ws.map((w, i) => {
  const x = align === 'l' ? 0 : align === 'r' ? 15 - w : (15 - w) / 2;
  return `<path d="M${x} ${top + i * 3}h${w}" stroke="#111" stroke-width="1.500"/>`;
}).join('');
const svg15 = inner => `<svg class="size-[15px]" viewBox="0 0 15 15">${inner}</svg>`;
const cell = (label, icon) => `<button class="flex h-[25px] w-[27px] items-center justify-center" aria-label="${label}">${svg15(icon)}</button>`;
const active = (label, icon) => `<button class="flex h-[25px] w-[27px] items-center justify-center rounded-sm border border-[#c29539] bg-linear-to-b from-[#ffd268] to-[#ffee86]" aria-label="${label}">${svg15(icon)}</button>`;
const sep = '<span class="mx-1 h-5 w-px bg-[#d3d6dc]"></span>';
const indent = d => `<path d="M5 1h10M8 4h7M8 7h7M8 10h4M5 13h10" stroke="#111" stroke-width="1.500"/><path d="${d}" fill="#3a6fc4"/>`;
$('para').innerHTML =
  `<div class="flex h-[26px] items-center">${cell('顶端对齐', bars([15, 11, 15], 'c', 1))}${active('中部对齐', bars([15, 11, 15, 11], 'c', 3))}${cell('底端对齐', bars([15, 11, 15], 'c', 8))}${sep}${cell('项目符号', '<path d="M6 2h9M6 7h9M6 13h9" stroke="#333"/><path d="M0 1h3v3H0zM0 6h3v3H0zM0 12h3v3H0z" fill="#4a6cae"/>')}${sep}${cell('旋转文本', '<path d="M0 14h4M7 14h5M2 14l4-11 4 11M3 10h6" stroke="#3f5f9f" stroke-width="1.800" fill="none"/><path d="M11 1c3 0 4 3 2 5" stroke="#3f5f9f" fill="none"/>')}</div>` +
  `<div class="flex h-[26px] items-center">${cell('左对齐', bars([15, 10, 15, 10, 15], 'l', 1))}${active('居中', bars([15, 10, 15, 10, 15], 'c', 1))}${cell('右对齐', bars([15, 10, 15, 10, 15], 'r', 1))}${cell('两端对齐', bars([15, 15, 15, 15, 15], 'l', 1))}${sep}${cell('文字方向', '<path d="M1 0v15M5 0v15M9 9v6M13 9v6" stroke="#111" stroke-width="1.500"/><path d="M8 7l3-7 3 7M9 5h4" stroke="#3a6fc4" stroke-width="1.500" fill="none"/>')}${sep}${cell('减少缩进', indent('M0 7l4-3v6z'))}${cell('增加缩进', indent('M5 7L1 4v6z'))}</div>`;

// ---- menus ----
const g = 'stroke="#8c8c8c" fill="#e4e4e4"';
const ic = {
  auto: '<path d="M6 0v2M11 4H8M4 7v3M0 4h2M4.500 0v2M4.500 14v2" stroke="#f26a21" stroke-width="1.300"/><g fill="url(#gBlue)" stroke="#5d6f8e"><path d="M2.500 2.500h4v4h-4zM11.500 2.500h4v4h-4zM2.500 10.500h4v4h-4z"/></g>',
  l: `<path d="M2.500 2v12" stroke="#555" stroke-width="2"/><path d="M5.500 2.500h5v3h-5zM5.500 7.500h8v3h-8z" ${g}/><path d="M5 13h7M5 13l2-2" stroke="#777" fill="none"/>`,
  c: `<path d="M8 1v14" stroke="#555"/><path d="M5.500 3.500h5v3h-5zM3.500 9.500h9v3h-9z" ${g}/>`,
  r: `<path d="M13.500 2v12" stroke="#555" stroke-width="2"/><path d="M5.500 2.500h5v3h-5zM2.500 7.500h8v3h-8z" ${g}/><path d="M4 13h7M11 13l-2-2" stroke="#777" fill="none"/>`,
  t: `<path d="M2 2.500h12" stroke="#555" stroke-width="2"/><path d="M2.500 5.500h3v5h-3zM7.500 5.500h3v8h-3z" ${g}/><path d="M13 5v7M13 5l-1 2" stroke="#777"/>`,
  m: `<path d="M1 8h14" stroke="#555"/><path d="M3.500 5.500h3v5h-3zM9.500 3.500h3v9h-3z" ${g}/>`,
  b: `<path d="M2 13.500h12" stroke="#555" stroke-width="2"/><path d="M2.500 6.500h3v5h-3zM7.500 2.500h3v9h-3z" ${g}/><path d="M13 4v7M13 11l-1-2" stroke="#777"/>`,
  sp: '<g stroke="#f26a21" stroke-width="1.300"><path d="M8 0v3M11 0v3M0 8h3M0 11h3"/></g><g fill="url(#gBlue)" stroke="#5d6f8e"><path d="M4.500 5.500h4v4h-4zM11.500 5.500h4v4h-4zM4.500 12h4v3.500h-4z"/></g>',
  rr: '<path d="M10 14V3l6 11z" fill="url(#gPurple)"/><path d="M0 14h8V9z" fill="url(#gGray)"/><path d="M3 7V4h5M6 2l2 2-2 2" fill="none" stroke="#2f5fb8" stroke-width="1.300"/>',
  rl: '<path d="M6 14V3L0 14z" fill="url(#gPurple)"/><path d="M16 14H8V9z" fill="url(#gGray)"/><path d="M13 7V4H8M10 2L8 4l2 2" fill="none" stroke="#2f5fb8" stroke-width="1.300"/>',
  fv: '<path d="M13 1v6H2z" fill="url(#gGray)"/><path d="M13 15V9H2z" fill="url(#gPurple)"/>',
  fh: '<path d="M7 2v12H1z" fill="url(#gGray)"/><path d="M9 2v12h6z" fill="url(#gPurple)"/>'
};
const row = (icon, text, key, o = {}) => `
  <button role="menuitem" class="relative flex h-7 w-full items-center whitespace-nowrap text-left ${o.off ? 'text-[#a3a3a3]' : 'text-[#333]'} ${o.hot ? 'rounded-sm border border-[#edc34e] bg-linear-to-b from-[#fff0b5] via-[#fce08a] to-[#fff3bc]' : ''}">
    <span class="flex h-full w-[30px] shrink-0 items-center justify-center ${o.hot ? '' : 'border-r border-[#e2e4e9]'}">${icon ? `<svg class="size-4" viewBox="0 0 16 16">${ic[icon]}</svg>` : ''}</span>
    <span class="${o.hot || o.arrow ? 'pl-2' : 'pl-2.5'}">${text}(<u>${key}</u>)${o.tail || ''}</span>
    ${o.arrow ? '<svg class="ml-auto mr-3 h-2 w-1" viewBox="0 0 4 8"><path d="M0 0l4 4-4 4z" fill="#2b4a8c"/></svg>' : ''}
  </button>`;
const head = t => `<div class="flex h-[26px] items-center bg-[#f0f1f6] pl-2 font-bold">${t}</div>`;
const rule = '<div class="h-0.5 bg-[#eceef3]"></div>';
$('menu').innerHTML =
  head('对齐形状') + row('auto', '自动对齐', 'A') + rule +
  row('l', '左对齐', 'L', {off: 1}) + row('c', '水平居中', 'C', {off: 1}) + row('r', '右对齐', 'R', {off: 1}) + rule +
  row('t', '顶端对齐', 'T', {off: 1}) + row('m', '垂直居中', 'M', {off: 1}) + row('b', '底端对齐', 'B', {off: 1}) +
  head('空间形状') + row('sp', '自动调整间距', 'S') + row('', '间距选项', 'O', {tail: '...'}) + rule +
  row('', '空间形状', 'S', {arrow: 1}) + head('方向形状') +
  `<div class="relative">${row('', '旋转形状', 'T', {arrow: 1, hot: 1})}
    <div class="absolute left-full top-0 z-50 w-[156px] border border-[#a7abb4] bg-white shadow-[3px_3px_3px_rgba(90,90,140,0.25)]" role="menu">
      ${row('rr', '向右旋转 90°', 'R')}${row('rl', '向左旋转 90°', 'L')}
      <div class="relative">${row('fv', '垂直翻转', 'V', {hot: 1})}
        <div class="pointer-events-none absolute -left-[7px] -top-px h-[31px] w-[191px] border-[3px] border-[#f8383a]"></div>
      </div>
      ${row('fh', '水平翻转', 'H')}
      <div role="tooltip" class="absolute left-[102px] top-[91px] h-[30px] whitespace-nowrap rounded-sm border border-[#767676] bg-linear-to-b from-white to-[#e4e5f0] px-1.5 pt-1 text-[#4a4a4a] shadow-[3px_3px_3px_rgba(90,90,140,0.25)]">垂直翻转 (Ctrl+J)</div>
    </div>
  </div>` + row('', '旋转图表', 'D', {arrow: 1});

// ---- shape stencil ----
const poly = (n, rot = -90) => {
  const p = Array.from({length: n}, (_, i) => { const a = (rot + i * 360 / n) * Math.PI / 180; return [Math.cos(a), Math.sin(a)]; });
  const mx = Math.max(...p.map(q => Math.abs(q[0])));
  return `<polygon points="${p.map(q => (14.5 + q[0] / mx * 13.5).toFixed(1) + ',' + (14.5 + q[1] * 13.5).toFixed(1)).join(' ')}"/>`;
};
const shapes = [
  ['矩形', '<rect x="1" y="4.500" width="27" height="20"/>'],
  ['正方形', '<rect x="1" y="1" width="27" height="27"/>'],
  ['椭圆', '<ellipse cx="14.500" cy="14.500" rx="13.500" ry="9"/>'],
  ['圆形', '<circle cx="14.500" cy="14.500" r="13.500"/>'],
  ['圆角矩形', '<rect x="1" y="4.500" width="27" height="20" rx="4"/>'],
  ['三角形', '<path d="M14.500 3L28 26H1z"/>'],
  ['45 度单向箭头', '<path d="M1 14.500l6-6v3.500h21v5H7v3.500z"/>'],
  ['45 度双向箭头', '<path d="M1 14.500l6-6v3.500h15V8.500l6 6-6 6V17H7v3.500z"/>'],
  null,
  ['五边形', poly(5)], ['六边形', poly(6, 0)], ['七边形', poly(7)], ['八边形', '<path d="M9 1h11l8 8v11l-8 8H9l-8-8V9z"/>'],
  ['五角星形', '<path d="M14.500 1l3.200 10H28l-8.300 6L23 27l-8.500-6.200L6 27l3.300-10L1 11h10.300z"/>']
];
$('shapes').innerHTML = shapes.map(s => s ? `
  <li class="flex h-[47px] items-center gap-[3px] pl-[5px]"><svg class="size-[29px] shrink-0" viewBox="0 0 29 29" fill="url(#gShape)" stroke="#444">${s[1]}</svg><span>${s[0]}</span></li>`
  : '<li class="mt-1.5 h-2 border-t border-[#dcdfe4]"></li>').join('');

// ---- rulers: 5 px per unit, a label every 10 units ----
const tickStart = u => { const m = Math.abs(u) % 10; return m === 0 ? 0 : m === 5 ? 6 : m % 2 ? 12 : 9; };
let h = '', hl = '', v = '', vl = '';
for (let u = -6; u < 338; u++) {
  const x = 30.5 + u * 5;
  h += `M${x} ${tickStart(u)}V20`;
  if (u % 10 === 0) hl += `<text x="${x + 1}" y="10">${50 + u}</text>`;
}
for (let u = -10; u < 152; u++) {
  const y = 39.5 + u * 5;
  v += `M${tickStart(u)} ${y}H19`;
  if (u % 10 === 0 && u < 150) vl += `<text text-anchor="end" transform="translate(10 ${y + 2}) rotate(-90)">${230 - u}</text>`;
}
const font = `font-family="Liberation Sans, sans-serif" font-size="11" fill="#000"`;
$('hruler').innerHTML = `<path d="${h}" stroke="#8c8c8c"/><g ${font}>${hl}</g>`;
$('vruler').innerHTML = `<path d="${v}" stroke="#8c8c8c"/><g ${font}>${vl}</g>`;

// ---- drawing page ----
let minor = '', major = '';
for (let x = 184.5; x < 1394; x += 50) minor += `M${x} 392V1010`;
for (let x = 209.5; x < 1394; x += 50) major += `M${x} 392V1010`;
for (let y = 417.5; y < 1010; y += 50) { minor += `M170 ${y}H1394`; major += `M170 ${y + 25}H1394`; }
$('lines').innerHTML = `
  <path d="${minor}" stroke="#dedede"/><path d="${major}" stroke="#cfcfcf"/>
  <path d="M170 392.500H1394.500V1010" fill="none" stroke="#b8b8b8"/>
  <g fill="none" stroke="#404040" stroke-width="1.600">
    <path d="M705 544V574M480 604V574H930V604M480 667V789M380 789V759H580V789M430 759V789M530 759V789"/>
    <path d="M842 636L694 696M1018 636L1119 696M860 667V696M1000 667V696"/>
    <path d="M655 759L646 789M694 759V789M733 759L742 789"/>
    <path d="M821 759L790 789M836 759V789M883 759V789M899 759L929 789"/>
    <path d="M977 759V789M1023 759V789M1080 759L1071 789M1119 759V789M1159 759L1168 789"/>
  </g>`;
const box = (x, y, w, hgt, text, tall) => {
  const d = document.createElement('div');
  d.className = tall
    ? 'absolute flex flex-col items-center justify-center border-2 border-[#4a4a4a] pb-[3px] text-[17px] leading-[21px] text-[#1a1a1a]'
    : 'absolute flex items-center justify-center whitespace-nowrap border-2 border-[#4a4a4a] pb-[3px] text-[17px] leading-[21px] text-[#1a1a1a]';
  d.style.left = (x - 179) + 'px'; d.style.top = (y - 203) + 'px';
  d.style.width = w + 'px'; d.style.height = hgt + 'px';
  if (tall) [...text].forEach(c => { const s = document.createElement('span'); s.textContent = c; d.append(s); });
  else d.textContent = text;
  $('canvas').append(d);
};
box(616, 480, 177, 64, '美妆销售网站');
box(391, 603, 177, 64, '前台');
box(841, 603, 177, 64, '后台');
[[654, '员工管理'], [819, '商品管理'], [959, '用户管理'], [1079, '订单管理']].forEach(([x, t]) => box(x, 695, 81, 65, t));
[[362, '用户注册'], [412, '用户登录'], [462, '商品浏览'], [512, '加入购物车'], [562, '下单支付'],
 [628, '员工信息添加'], [677, '员工信息修改'], [725, '员工信息删除'], [772, '商品信息搜索'], [819, '商品信息增加'],
 [866, '商品信息修改'], [912, '商品信息删除'], [959, '用户信息修改'], [1005, '用户信息删除'], [1053, '订单发货管理'],
 [1102, '订单信息修改'], [1151, '订单信息删除']].forEach(([x, t]) => box(x, 788, 35, 146, t, true));
</script>
</body>
</html>
